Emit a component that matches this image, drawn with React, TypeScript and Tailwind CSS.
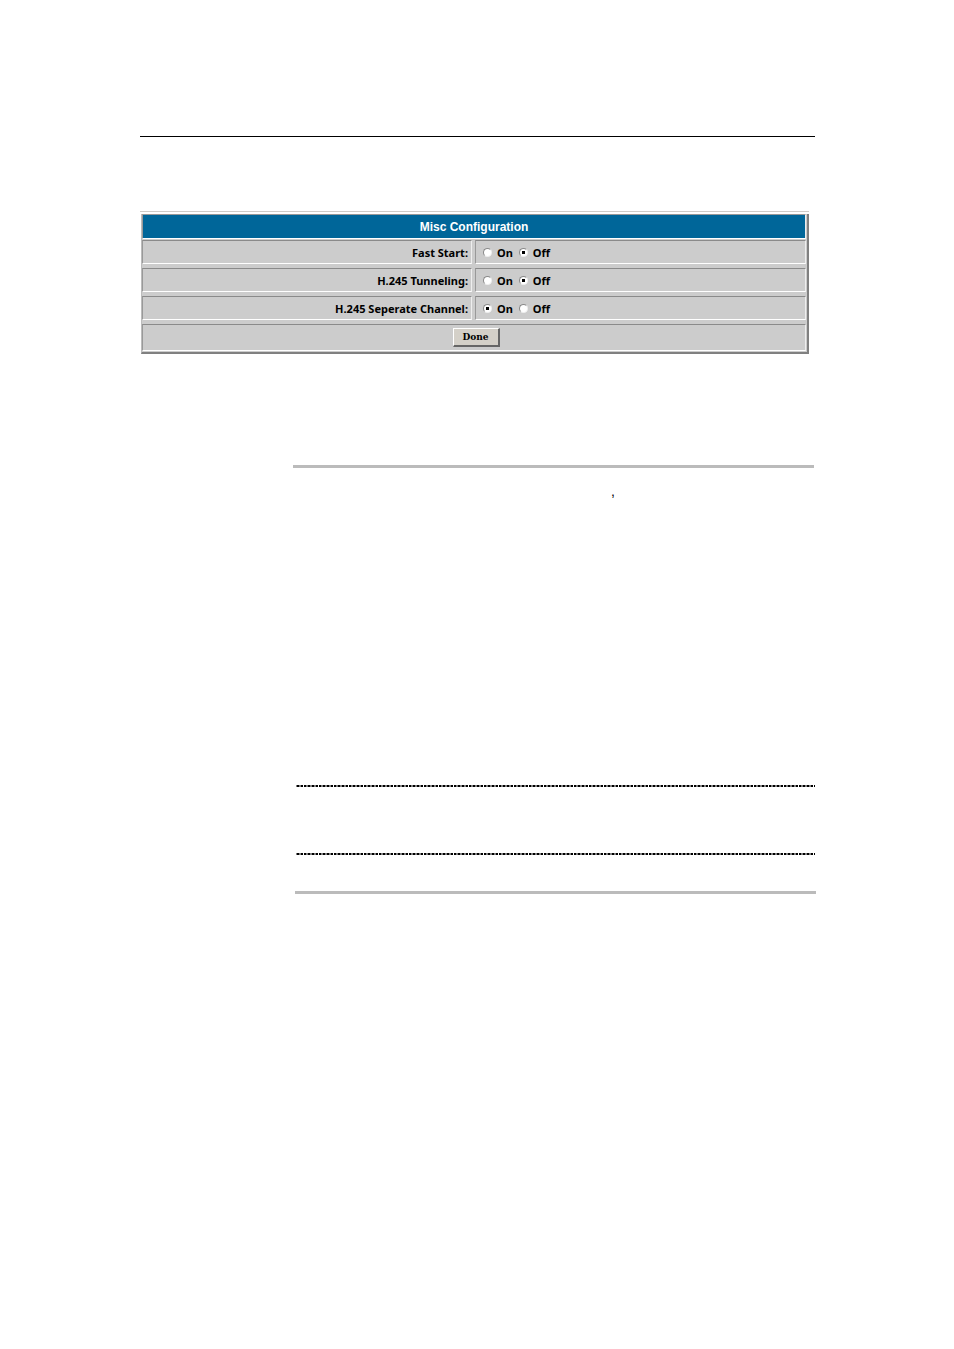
const rows = [
  { name: 'fast-start', label: 'Fast Start:', value: 'Off' },
  { name: 'tunneling', label: 'H.245 Tunneling:', value: 'Off' },
  { name: 'separate-channel', label: 'H.245 Seperate Channel:', value: 'On' },
];

const inset = 'border border-t-[#8a8a8a] border-l-[#999999] border-r-[#eeeeee] border-b-white';

function Choice({ group, option, checked }: { group: string; option: string; checked: boolean }) {
  return (
    <label className="flex items-center gap-[5px]">
      <input
        type="radio"
        name={group}
        value={option}
        defaultChecked={checked}
        className="mb-0.5 size-[9px] appearance-none rounded-full border border-t-[#888888] border-l-[#888888] border-r-[#eeeeee] border-b-[#eeeeee] bg-white checked:bg-[radial-gradient(circle,#000_1.5px,#fff_2px)]"
      />
      <span>{option}</span>
    </label>
  );
}

function DottedRule() {
  return (
    <hr className="ml-[156px] h-0.5 border-0 bg-[repeating-linear-gradient(90deg,#808080_0_1px,#000_1px_3px,#808080_3px_5px,#000_5px_7px,#fff_7px_8px,#000_8px_10px,#808080_10px_12px,#000_12px_14px,#808080_14px_15px)]" />
  );
}

export default function App() {
  return (
    <main className="min-h-screen bg-white pt-[136px] pr-[139px] pl-[140px] font-['DejaVu_Sans',sans-serif] text-black">
      <hr className="border-t border-black" />
      <form
        className="mt-[74px] mr-[6px] border-t border-[#d0ccc8] pt-0.5"
        onSubmit={(e) => e.preventDefault()}
      >
        <div className="ml-px border-r-2 border-b-2 border-l border-l-[#bbbbbb] border-r-[#808080] border-b-[#808080] bg-[#cccccc] pr-px pb-px">
          <table className="w-full table-fixed border-separate border-spacing-0 text-[11px] leading-4 font-bold">
            <colgroup>
              <col className="w-1/2" />
              <col className="w-1/2" />
            </colgroup>
            <thead>
              <tr>
                <th
                  colSpan={2}
                  className="h-[25px] border border-t-[#999999] border-l-[#999999] border-r-[#eeeeee] border-b-white bg-[#006699] p-0 text-center font-['Liberation_Sans',sans-serif] text-[12px] text-white"
                >
                  Misc Configuration
                </th>
              </tr>
            </thead>
            <tbody className="font-['Noto_Sans',sans-serif]">
              {rows.map((row) => (
                <tr key={row.name}>
                  <th scope="row" className="p-0 pt-px pr-0.5 pb-[3px]">
                    <div className={`flex h-6 items-center justify-end pt-px pr-[3px] ${inset}`}>{row.label}</div>
                  </th>
                  <td className="p-0 pt-px pb-[3px] pl-px">
                    <div className={`flex h-6 items-center gap-1.5 pt-0.5 pl-[7px] ${inset}`}>
                      <Choice group={row.name} option="On" checked={row.value === 'On'} />
                      <Choice group={row.name} option="Off" checked={row.value === 'Off'} />
                    </div>
                  </td>
                </tr>
              ))}
              <tr>
                <td colSpan={2} className="p-0 pt-px">
                  <div className={`flex h-[27px] items-center justify-center pl-1 ${inset}`}>
                    <button
                      type="submit"
                      className="flex h-[19px] w-[47px] items-center justify-center border border-t-white border-l-white border-r-2 border-b-2 border-r-[#666666] border-b-[#666666] bg-[#d4d0c8] font-['DejaVu_Serif',serif] text-[9px] leading-4 font-bold"
                    >
                      Done
                    </button>
                  </div>
                </td>
              </tr>
            </tbody>
          </table>
        </div>
      </form>
      <section>
        <hr className="mt-[111px] mr-px ml-[153px] border-t-[3px] border-[#bbbbbb]" />
        <p className="mt-[15px] ml-[471px] font-['Liberation_Sans',sans-serif] text-[14px] leading-4">,</p>
        <div className="mt-[286px]">
          <DottedRule />
        </div>
        <div className="mt-[66px]">
          <DottedRule />
        </div>
        <hr className="mt-9 -mr-px ml-[155px] border-t-[3px] border-[#bbbbbb]" />
      </section>
    </main>
  );
}
